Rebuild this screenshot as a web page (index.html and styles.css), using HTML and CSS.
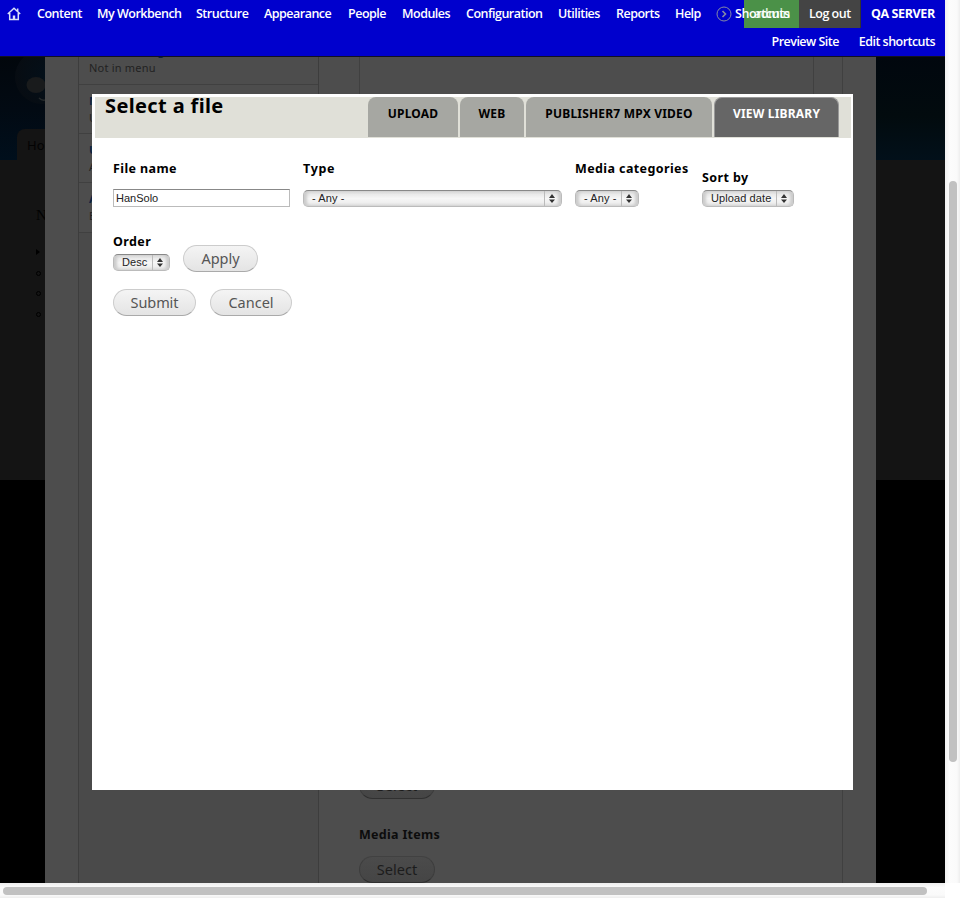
FILE: index.html
```html
<!DOCTYPE html>
<html lang="en">
<head>
<meta charset="utf-8">
<title>Select a file</title>
<link rel="stylesheet" href="styles.css">
</head>
<body>
<div class="window">
  <div class="viewport">
    <div class="site">
      <div class="site-header">
        <svg class="logo" width="45" height="104" viewBox="0 0 45 104">
          <defs><radialGradient id="drop" cx=".65" cy=".5" r=".65"><stop offset="0" stop-color="#03101a"/><stop offset="1" stop-color="#070c12"/></radialGradient></defs>
          <circle cx="42" cy="21" r="27" fill="url(#drop)"/>
          <ellipse cx="36" cy="29" rx="9.500" ry="8" fill="#191b1c"/>
          <path d="M39 42q3 3 6 2" stroke="#25292b" stroke-width="1.500" fill="none"/>
        </svg>
        <div class="site-tab">Home</div>
      </div>
      <div class="site-nav">
        <h2>Navigation</h2>
        <ul><li class="closed"></li><li></li><li></li><li></li></ul>
      </div>
      <div class="site-footer"></div>
    </div>
    <div class="panel">
      <div class="node-form">
        <div class="vertical-tabs">
          <div class="vtab first"><b>Menu settings</b><span>Not in menu</span></div>
          <div class="vtab"><b>Menu</b><span>Unlisted</span></div>
          <div class="vtab"><b>URL</b><span>Automatic</span></div>
          <div class="vtab"><b>Authoring</b><span>By admin</span></div>
        </div>
        <div class="fields">
          <div class="body-box"></div>
          <div class="button dim">Select</div>
          <div class="field-label">Media Items</div>
          <div class="button dim">Select</div>
        </div>
      </div>
    </div>
    <nav class="toolbar">
      <div class="menu">
        <svg width="14" height="14" viewBox="0 0 14 14" fill="none" stroke="#d8e0f8" stroke-width="1.500"><path d="M.8 7 7 1.300 13.200 7M2.700 6v6.600h8.600V6M10.700 1.500v3"/><path d="M7 8.500v4" stroke-width="2.400"/></svg>
        <a>Content</a><a>My Workbench</a><a>Structure</a><a>Appearance</a><a>People</a><a>Modules</a><a>Configuration</a><a>Utilities</a><a>Reports</a><a>Help</a>
        <svg width="16" height="16" viewBox="0 0 16 16" fill="none" stroke="#858aa5"><circle cx="8" cy="8" r="7"/><path d="m6.500 5 3 3-3 3" stroke-width="1.600"/></svg>
        <div class="user"><a class="account">admin</a><a class="logout">Log out</a><a class="server">QA SERVER</a></div>
        <a class="shortcuts">Shortcuts</a>
      </div>
      <div class="shortcut-bar"><a class="preview">Preview Site</a><a class="edit">Edit shortcuts</a></div>
    </nav>
    <section class="modal">
      <header>
        <h1>Select a file</h1>
        <div class="tabs"><a class="t1">UPLOAD</a><a class="t2">WEB</a><a class="t3">PUBLISHER7 MPX VIDEO</a><a class="t4 active">VIEW LIBRARY</a></div>
      </header>
      <div class="filters">
        <label><span class="l-name">File name</span><span class="input">HanSolo</span></label>
        <label><span class="l-type">Type</span><span class="select">- Any -<i><svg width="6" height="9" viewBox="0 0 6 9"><path d="M0 4 3 0l3 4zM0 5.500h6L3 9z"/></svg></i></span></label>
        <label><span class="l-media">Media categories</span><span class="select s-any">- Any -<i><svg width="6" height="9" viewBox="0 0 6 9"><path d="M0 4 3 0l3 4zM0 5.500h6L3 9z"/></svg></i></span></label>
        <label class="sort"><span class="l-sort">Sort by</span><span class="select s-date">Upload date<i><svg width="6" height="9" viewBox="0 0 6 9"><path d="M0 4 3 0l3 4zM0 5.500h6L3 9z"/></svg></i></span></label>
      </div>
      <div class="order-row">
        <label><span class="l-order">Order</span><span class="select s-desc">Desc<i><svg width="6" height="9" viewBox="0 0 6 9"><path d="M0 4 3 0l3 4zM0 5.500h6L3 9z"/></svg></i></span></label>
        <div class="button apply">Apply</div>
      </div>
      <div class="actions"><div class="button submit">Submit</div><div class="button cancel">Cancel</div></div>
    </section>
  </div>
  <div class="vbar"><div></div></div>
  <div class="hbar"><div></div></div>
</div>
</body>
</html>
```
FILE: styles.css
```css
* { box-sizing: border-box; }
body { margin: 0; background: #fff; font-family: "Noto Sans", sans-serif; }
h1, h2, ul { margin: 0; padding: 0; }
.window { display: grid; grid-template: 883px 15px / 945px 15px; width: 960px; height: 898px; overflow: hidden; }
.viewport { position: relative; overflow: hidden; background: #000; }

/* dimmed site */
.site { display: flex; flex-direction: column; height: 883px; }
.site-header { height: 160px; padding-top: 56px; position: relative; background: linear-gradient(#02070c 56px, #020a13 110px, #000f1c); flex: none; }
.site-header::after { content: ""; position: absolute; left: 876px; right: 0; top: 56px; bottom: 0; background: linear-gradient(#01070e, #020b0e 60px, #02101a); }
.logo { display: block; }
.site-tab { position: absolute; left: 17px; top: 129px; width: 80px; height: 31px; padding: 6px 10px; border-radius: 8px 0 0 0; background: #141414; color: #030303; font-size: 13px; line-height: 20px; }
.site-nav { height: 320px; background: #141414; padding: 45px 0 0 36px; flex: none; }
.site-nav h2 { font: 15px/20px "Liberation Serif", serif; color: #020202; }
.site-nav ul { list-style: none; padding-top: 24px; display: flex; flex-direction: column; gap: 15.500px; }
.site-nav li { width: 5px; height: 5px; border: 1px solid #000; border-radius: 50%; }
.site-nav .closed { width: 0; height: 6px; border-width: 3px 0 3px 4px; border-color: transparent transparent transparent #000; border-radius: 0; }
.site-footer { flex: 1; background: #000; }

/* dimmed overlay form */
.panel { position: absolute; left: 45px; top: 0; width: 831px; height: 883px; background: #4d4d4d; padding-left: 33px; }
.node-form { display: grid; grid-template-columns: 241px 1fr; width: 765px; height: 883px; border-right: 1px solid #404040; }
.vertical-tabs { border: solid #3d3d3d; border-width: 0 1px; background: #4a4a4a; }
.vtab { height: 49px; padding: 7px 10px; background: #4d4d4d; border-bottom: 1px solid #404040; font-size: 11px; line-height: 17px; letter-spacing: .2px; color: #222; }
.vtab b { display: block; color: #0b2240; }
.vtab span { display: block; }
.vtab.first { height: 85px; padding-top: 42px; }
.vtab:last-child { height: 50px; }
.fields { padding-left: 40px; }
.body-box { width: 455px; height: 772px; border: solid #404040; border-width: 0 1px; }
.button.dim { width: 76px; background: linear-gradient(#4b4b4b, #454545); border-color: #414141 #3d3d3d #303030; color: #1c1c1c; }
.field-label { margin: 26px 0 12px; font-size: 12.500px; line-height: 19px; font-weight: 700; letter-spacing: .3px; color: #0c0c0c; }

/* toolbar */
.toolbar { position: absolute; left: 0; top: 0; width: 945px; height: 57px; background: #0000cd; border-bottom: 1px solid #111122; font: 600 12.500px/28px "Open Sans", sans-serif; color: #fff; white-space: nowrap; letter-spacing: -.53px; }
.menu { display: grid; grid-template-columns: 30px 60px 99px 68px 84px 54px 64px 92px 58px 59px 41px 28px 201px; padding-left: 7px; height: 28px; position: relative; letter-spacing: -.5px; }
.menu > svg { align-self: center; }
.user { display: flex; height: 28px; }
.account { width: 55px; padding-left: 10px; background: #4b9148; color: #d8f0d8; }
.logout { width: 62px; padding-left: 10px; background: #444; border-right: 1px solid #333; }
.server { padding-left: 10px; font-weight: 700; letter-spacing: -.4px; }
.shortcuts { position: absolute; left: 735px; top: 0; letter-spacing: -.4px; }
.shortcut-bar { display: flex; justify-content: flex-end; gap: 20px; padding-right: 10px; }

/* dialog */
.modal { position: absolute; left: 92px; top: 94px; width: 761px; height: 696px; background: #fff; padding: 3px 2px 0 3px; }
.modal header { display: flex; height: 41px; background: #e0e0d8; justify-content: space-between; padding: 0 12px 0 10px; }
h1 { font-size: 20px; line-height: 18px; font-weight: 700; letter-spacing: .37px; white-space: nowrap; }
.tabs { display: grid; grid-template-columns: 90px 64px 186px 125px; column-gap: 2px; height: 40px; font: 700 12px/33px "Noto Sans", sans-serif; text-align: center; white-space: nowrap; }
.tabs a { background: #a6a7a2; border-radius: 8px 8px 0 0; letter-spacing: .2px; }
.tabs .active { background: #666; color: #fff; border: 1px solid #999; border-width: 1px 1px 0; line-height: 31px; }
.filters { display: grid; grid-template-columns: 190px 272px 127px 92px; padding: 21px 0 0 18px; height: 95px; }
label { display: block; font-size: 12.500px; font-weight: 700; letter-spacing: .4px; white-space: nowrap; }
label > span:first-child { display: block; line-height: 20px; width: max-content; }
.l-type { letter-spacing: .7px; }
.select, .input { display: flex; font: 11px/15px "Liberation Sans", sans-serif; letter-spacing: .1px; color: #222; }
.input { width: 177px; height: 18px; margin-top: 10px; padding: 1px 2px; border: 1px solid #bbb; border-top-color: #888; letter-spacing: 0; }
.select { width: 259px; height: 17px; margin-top: 11px; padding-left: 8px; justify-content: space-between; border: 1px solid #aaa; border-color: #888 #bbb #bbb; border-radius: 5px; background: linear-gradient(#e0e0e0, #f6f6f6 50%, #e9e9e9); box-shadow: inset 3px 0 3px #ccc, inset -3px 0 3px #ccc; }
.select i { width: 17px; border-left: 1px solid #bbb; display: flex; align-items: center; padding-left: 4px; }
.select svg { fill: #333; display: block; }
.s-any { width: 64px; }
.s-date { width: 92px; }
.s-desc { width: 57px; margin-top: 2px; }
.sort { padding-top: 9px; }
.sort .select { margin-top: 2px; }
.order-row { display: flex; padding: 0 18px; gap: 13px; height: 55px; margin-top: -1px; }
.button { width: 83px; height: 27px; border: 1px solid #ccc; border-bottom-color: #aaa; border-radius: 14px; background: linear-gradient(#f4f4f4, #e4e4e4); font-size: 14.500px; line-height: 25px; text-align: center; color: #555; }
.apply { width: 75px; margin-top: 13px; }
.actions { display: flex; padding: 2px 18px; gap: 14px; }
.submit { letter-spacing: -.1px; }
.cancel { width: 82px; }

/* scrollbars */
.vbar { background: linear-gradient(90deg, #f0f0f0, #fcfcfc 30%, #fafafa 80%, #eee); padding: 181px 0 0 4px; }
.vbar div { width: 8px; height: 581px; border-radius: 4px; background: #c1c1c1; }
.hbar { background: linear-gradient(#eee, #fcfcfc 30%, #fafafa 80%, #eee); padding: 4px 0 0 3px; }
.hbar div { width: 924px; height: 8px; border-radius: 4px; background: #c1c1c1; }
```
